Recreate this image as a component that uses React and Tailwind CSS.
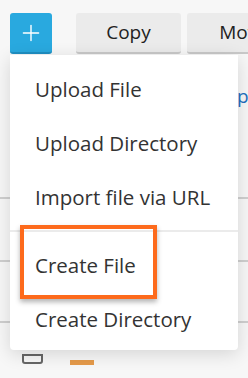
import { Plus } from 'lucide-react';

const items = ['Upload File', 'Upload Directory', 'Import file via URL'];
const createItems = ['Create File', 'Create Directory'];

const MenuItem = ({ label }) => (
  <div className="flex h-[54px] items-center px-[25px] text-[20.5px] text-[#333]">{label}</div>
);

const App = () => (
  <div className="relative h-[378px] w-[248px] overflow-hidden bg-[#f7f7f7] font-['Open_Sans',sans-serif]">
    {/* toolbar */}
    <div className="flex items-start pl-[10px] pt-[13px]">
      <button
        type="button"
        className="flex h-[41px] w-[42px] shrink-0 items-center justify-center rounded-[3px] border-b-2 border-[#1f8fc2] bg-[#29a9df] text-white"
      >
        <Plus size={26} strokeWidth={1.3} />
      </button>
      <button
        type="button"
        className="ml-[24px] h-[41px] w-[105px] shrink-0 rounded-[3px] border-b-2 border-[#c9c9c9] bg-[#ebebeb] text-[19px] font-medium text-[#222]"
      >
        Copy
      </button>
      <button
        type="button"
        className="ml-[6px] h-[41px] w-[113px] shrink-0 rounded-[3px] border-b-2 border-[#c9c9c9] bg-[#ebebeb] text-[19px] font-medium text-[#222]"
      >
        Move
      </button>
    </div>

    {/* file list behind the menu */}
    <div className="mt-[22px] flex flex-col">
      <div className="flex h-[121px] items-start justify-end pt-[6px] text-[19px] text-[#1e6fc0]">
        <span className="w-[11px] overflow-hidden whitespace-nowrap">py</span>
      </div>
      <div className="h-[2px] bg-[#cfcfcf]" />
      <div className="h-[61px]" />
      <div className="h-[2px] bg-[#cfcfcf]" />
      <div className="h-[59px]" />
      <div className="h-[2px] bg-[#cfcfcf]" />
      <div className="flex items-start gap-[27px] pl-[22px] pt-[31px]">
        <div className="h-[10px] w-[21px] rounded-b-[3px] border-2 border-[#666]" />
        <div className="mt-[6px] h-[5px] w-[24px] bg-[#e59a4a]" />
      </div>
    </div>

    {/* dropdown menu */}
    <div className="absolute left-[10px] top-[55px] w-[228px] rounded-b-[4px] bg-white pt-[7px] pb-[4px] shadow-[0_4px_18px_rgba(0,0,0,0.14)]">
      {items.map((label) => (
        <MenuItem key={label} label={label} />
      ))}
      <div className="my-[6px] h-[2px] bg-[#ebebeb]" />
      {createItems.map((label) => (
        <MenuItem key={label} label={label} />
      ))}
    </div>

    {/* highlight annotation */}
    <div className="absolute left-[20px] top-[225px] h-[74px] w-[137px] border-[4px] border-[#fd6a1c] shadow-[0_3px_5px_rgba(0,0,0,0.3)]" />
  </div>
);

export default App;
